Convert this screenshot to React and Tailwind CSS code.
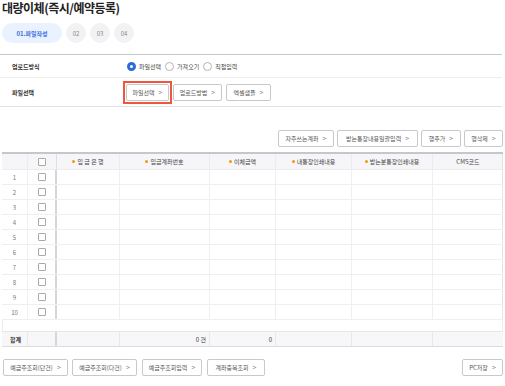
import React from "react";

const F = { fontFamily: '"Noto Sans CJK KR", "Noto Sans", sans-serif' };

function Btn({ w, children, className = "" }) {
  return (
    <div
      className={`h-[17px] ${w} flex items-center justify-center gap-[4px] border border-[#c9c9c9] rounded-[2px] bg-white text-[6px] text-[#555] ${className}`}
    >
      <span>{children}</span>
      <span className="text-[7px] text-[#888] leading-none">&gt;</span>
    </div>
  );
}

function Radio({ on, label }) {
  return (
    <div className="flex items-center gap-[3px]">
      {on ? (
        <div className="w-[9px] h-[9px] rounded-full border-[3px] border-[#2d6ae0] bg-white" />
      ) : (
        <div className="w-[9px] h-[9px] rounded-full border border-[#b5b5b5] bg-white" />
      )}
      <span className="text-[6px] text-[#444]">{label}</span>
    </div>
  );
}

function Check() {
  return <div className="w-[8px] h-[8px] border border-[#a9a9a9] rounded-[1px] bg-white" />;
}

const cols = "grid grid-cols-[26px_29px_63px_90px_66px_76px_81px_70px]";

function Dot() {
  return <span className="inline-block w-[3px] h-[3px] rounded-full bg-[#f7931e] mr-[2px] align-middle" />;
}

export default function App() {
  const headers = [
    { t: "입 금 은 행", d: true },
    { t: "입금계좌번호", d: true },
    { t: "이체금액", d: true },
    { t: "내통장인쇄내용", d: true },
    { t: "받는분통장인쇄내용", d: true },
    { t: "CMS코드", d: false },
  ];
  return (
    <div style={F} className="w-[505px] h-[386px] overflow-hidden bg-white relative">
      {/* Title */}
      <div className="pl-[2px] text-[12px] leading-[16px] font-bold text-[#222] tracking-[-0.5px]">
        대량이체(즉시/예약등록)
      </div>

      {/* Steps */}
      <div className="mt-[7px] pl-[2px] flex items-center gap-[4px]">
        <div className="h-[20px] w-[60px] rounded-full bg-[#ebf2ff] flex items-center justify-center text-[6px] font-bold text-[#3a6fe0]">
          01.파일작성
        </div>
        <div className="w-[20px] h-[20px] rounded-full bg-[#f2f2f4] flex items-center justify-center text-[6px] text-[#888]">02</div>
        <div className="w-[20px] h-[20px] rounded-full bg-[#f2f2f4] flex items-center justify-center text-[6px] text-[#888]">03</div>
        <div className="w-[20px] h-[20px] rounded-full bg-[#f2f2f4] flex items-center justify-center text-[6px] text-[#888]">04</div>
      </div>

      {/* Form */}
      <div className="mt-[11px] w-[502px] border-t border-[#c5c8cf] border-b border-b-[#e3e3e3]">
        <div className="h-[23px] flex items-center border-b border-[#efefef]">
          <div className="w-[127px] pl-[12px] text-[6px] font-bold text-[#333]">업로드방식</div>
          <div className="flex items-center gap-[4px]">
            <Radio on label="파일선택" />
            <Radio label="가져오기" />
            <Radio label="직접입력" />
          </div>
        </div>
        <div className="h-[28px] flex items-center">
          <div className="w-[123px] pl-[12px] text-[6px] font-bold text-[#333]">파일선택</div>
          <div className="flex items-center">
            <div className="border-2 border-[#f0553d] p-[1px]">
              <Btn w="w-[43px]">파일선택</Btn>
            </div>
            <Btn w="w-[49px]" className="ml-[1px]">업로드방법</Btn>
            <Btn w="w-[45px]" className="ml-[4px]">엑셀샘플</Btn>
          </div>
        </div>
      </div>

      {/* Right buttons */}
      <div className="mt-[23px] pr-[2px] flex justify-end gap-[3px]">
        <Btn w="w-[56px]">자주쓰는계좌</Btn>
        <Btn w="w-[81px]">받는통장내용일괄입력</Btn>
        <Btn w="w-[40px]">행추가</Btn>
        <Btn w="w-[39px]">행삭제</Btn>
      </div>

      {/* Table */}
      <div className="mt-[5px] ml-[2px] w-[501px] border-t-2 border-[#c4c7ce]">
        <div className={`${cols} h-[16px] bg-[#f6f6f8] border-b border-[#ececec] border-r border-r-[#e3e3e3] text-[6px] text-[#444]`}>
          <div className="border-r border-[#ececec]" />
          <div className="border-r border-[#e0e0e0] flex items-center justify-center"><Check /></div>
          {headers.map((h, i) => (
            <div key={i} className={`flex items-center justify-center ${i < 5 ? "border-r border-[#ececec]" : ""}`}>
              {h.d && <Dot />}
              <span>{h.t}</span>
            </div>
          ))}
        </div>
        {Array.from({ length: 10 }, (_, r) => (
          <div key={r} className={`${cols} h-[15px] border-b border-[#efefef] border-r border-r-[#e3e3e3]`}>
            <div className="flex items-center justify-center text-[6px] text-[#777] border-r border-[#f0f0f0]">{r + 1}</div>
            <div className="flex items-center justify-center border-r-2 border-[#d6d6d6]"><Check /></div>
            {[0, 1, 2, 3, 4, 5].map((c) => (
              <div key={c} className={c < 5 ? "border-r border-[#efefef]" : ""} />
            ))}
          </div>
        ))}
        <div className="h-[11px] border-l border-r border-[#ececec] bg-white" />
        <div className={`${cols} h-[16px] bg-[#f7f7f9] border-t border-[#e6e6e6] border-b border-b-[#dcdcdc] text-[6px] text-[#333]`}>
          <div className="flex items-center pl-[8px] font-bold border-r border-[#e8e8e8]">합계</div>
          <div className="border-r-2 border-[#d6d6d6]" />
          <div className="border-r border-[#e8e8e8]" />
          <div className="flex items-center justify-end pr-[3px] border-r border-[#e8e8e8]">0 건</div>
          <div className="flex items-center justify-end pr-[3px] border-r border-[#e8e8e8]">0</div>
          <div className="border-r border-[#e8e8e8]" />
          <div className="border-r border-[#e8e8e8]" />
          <div />
        </div>
      </div>

      {/* Bottom buttons */}
      <div className="mt-[12px] pl-[3px] pr-[2px] flex items-center">
        <Btn w="w-[65px]">예금주조회(단건)</Btn>
        <Btn w="w-[65px]" className="ml-[4px]">예금주조회(다건)</Btn>
        <Btn w="w-[60px]" className="ml-[5px]">예금주조회입력</Btn>
        <Btn w="w-[58px]" className="ml-[5px]">계좌중복조회</Btn>
        <div className="flex-1" />
        <Btn w="w-[41px]">PC저장</Btn>
      </div>
    </div>
  );
}
